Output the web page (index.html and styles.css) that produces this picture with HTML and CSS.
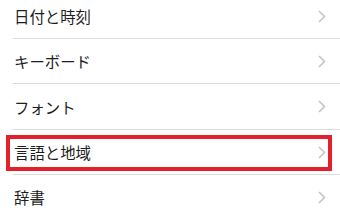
FILE: index.html
```html
<!DOCTYPE html>
<html lang="ja">

<head>
    <meta charset="UTF-8">
    <meta name="viewport" content="width=device-width, initial-scale=1.0">
    <title>一般</title>
    <link rel="stylesheet" href="styles.css">
</head>

<body>
    <ul class="menu">
        <li class="menu_item">
            <div class="menu_row">
                <span class="menu_text">日付と時刻</span>
                <svg class="chevron" width="8" height="13" viewBox="0 0 8 13"><polyline points="1,1 6.5,6.5 1,12" /></svg>
            </div>
        </li>
        <li class="menu_item">
            <div class="menu_row">
                <span class="menu_text">キーボード</span>
                <svg class="chevron" width="8" height="13" viewBox="0 0 8 13"><polyline points="1,1 6.5,6.5 1,12" /></svg>
            </div>
        </li>
        <li class="menu_item">
            <div class="menu_row cao">
                <span class="menu_text">フォント</span>
                <svg class="chevron" width="8" height="13" viewBox="0 0 8 13"><polyline points="1,1 6.5,6.5 1,12" /></svg>
            </div>
        </li>
        <li class="menu_item chon">
            <div class="menu_row">
                <span class="menu_text">言語と地域</span>
                <svg class="chevron" width="8" height="13" viewBox="0 0 8 13"><polyline points="1,1 6.5,6.5 1,12" /></svg>
            </div>
            <div class="khung_do"></div>
        </li>
        <li class="menu_item">
            <div class="menu_row">
                <span class="menu_text">辞書</span>
                <svg class="chevron" width="8" height="13" viewBox="0 0 8 13"><polyline points="1,1 6.5,6.5 1,12" /></svg>
            </div>
        </li>
    </ul>
</body>

</html>
```

FILE: styles.css
```css
* {
    margin: 0;
    padding: 0;
    box-sizing: border-box;
}

body {
    background: #fff;
    font-family: "Noto Sans CJK JP", "Noto Sans", sans-serif;
    overflow: hidden;
}

.menu {
    list-style: none;
    margin-top: -6px;
}

.menu_item {
    position: relative;
    padding-left: 13px;
}

.menu_row {
    height: 45px;
    display: flex;
    align-items: center;
    justify-content: space-between;
    padding-left: 1px;
    padding-right: 14px;
    border-bottom: 1px solid #dcdcdc;
}

.menu_row.cao {
    height: 46px;
}

.menu_text {
    font-size: 15.4px;
    color: #1e1e1e;
}

.chevron polyline {
    fill: none;
    stroke: #c4c4c8;
    stroke-width: 1.6;
}

/* red highlight */
.khung_do {
    position: absolute;
    top: 5px;
    bottom: 4px;
    left: 6px;
    right: 8px;
    border: 4px solid #e3202c;
}
```
